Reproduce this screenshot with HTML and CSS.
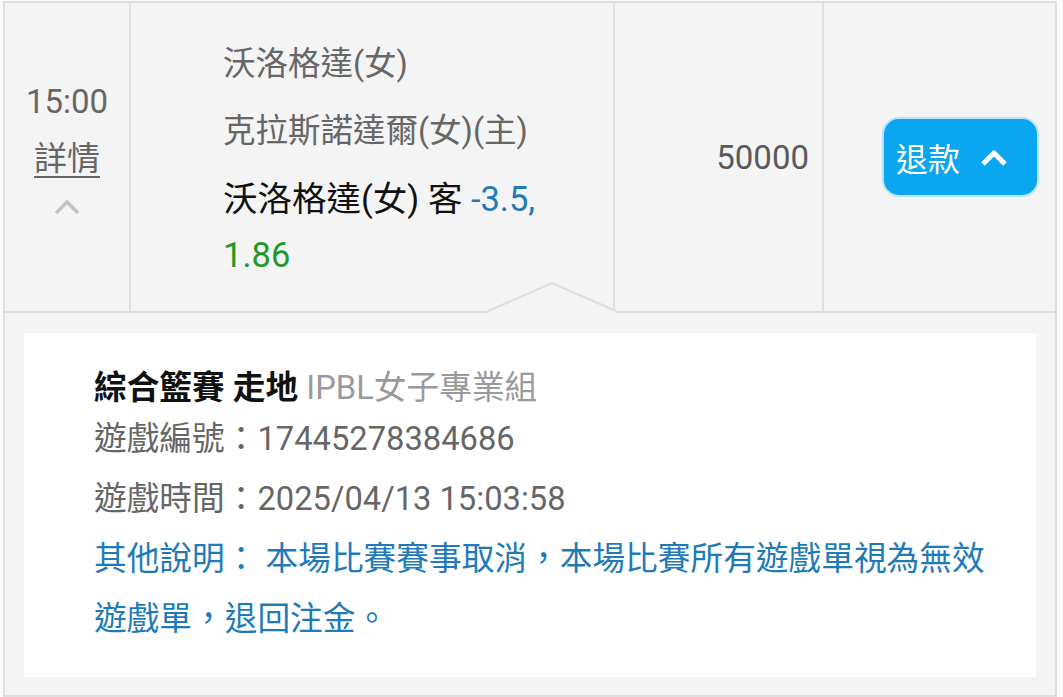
FILE: index.html
```html
<!DOCTYPE html>
<html lang="zh-Hant">
<head>
    <meta charset="UTF-8" />
    <title>注單明細</title>
    <link rel="stylesheet" href="styles.css">
</head>
<body>

    <div class="bet">
        <div class="bet-row">
            <div class="cell cell-time">
                <div class="time">15:00</div>
                <a class="detail-link" href="#">詳情</a>
                <svg class="chevron-gray" width="28" height="18" viewBox="0 0 28 18">
                    <polyline points="3,15 14,4 25,15" fill="none" stroke="#c2c2c2" stroke-width="3.5" />
                </svg>
            </div>

            <div class="cell cell-match">
                <div class="team">沃洛格達(女)</div>
                <div class="team">克拉斯諾達爾(女)(主)</div>
                <div class="pick">沃洛格達(女) 客 <span class="handicap">-3.5,</span> <span class="odds">1.86</span></div>

                <!-- arrow pointing down to the detail panel -->
                <svg class="notch" width="130" height="32" viewBox="0 0 130 32">
                    <polygon points="0,30 64,2 128,30 128,32 0,32" fill="#f4f4f4" />
                    <polyline points="0,30 64,2 128,30" fill="none" stroke="#dedede" stroke-width="2" />
                </svg>
            </div>

            <div class="cell cell-amount">50000</div>

            <div class="cell cell-action">
                <button class="btn-refund">
                    退款
                    <svg width="28" height="16" viewBox="0 0 28 16">
                        <polyline points="3,14 14,3 25,14" fill="none" stroke="#fff" stroke-width="5" stroke-linejoin="round" />
                    </svg>
                </button>
            </div>
        </div>

        <div class="bet-detail">
            <div class="detail-card">
                <div class="detail-title"><b>綜合籃賽 走地</b> <span class="league">IPBL女子專業組</span></div>
                <div class="detail-line">遊戲編號：17445278384686</div>
                <div class="detail-line">遊戲時間：2025/04/13 15:03:58</div>
                <div class="detail-note">其他說明： 本場比賽賽事取消，本場比賽所有遊戲單視為無效遊戲單，退回注金。</div>
            </div>
        </div>
    </div>

</body>
</html>
```

FILE: styles.css
```css
body {
    margin: 0;
    background-color: #fbfbfb;
    font-family: Roboto, "Noto Sans CJK TC", sans-serif;
    color: #666;
}

.bet {
    margin: 1px 6px 0 3px;
    border: 2px solid #dedede;
    background-color: #f4f4f4;
}

.bet-row {
    display: grid;
    grid-template-columns: 126px 484px 209px 1fr;
}

.cell {
    border-right: 2px solid #e0e0e0;
    border-bottom: 2px solid #dedede;
}

.cell:last-child {
    border-right: none;
}

.cell-time {
    display: flex;
    flex-direction: column;
    align-items: center;
    padding-top: 70px;
    font-size: 33px;
}

.time,
.detail-link {
    line-height: 57px;
}

.detail-link {
    color: #666;
    text-decoration: underline;
    text-decoration-thickness: 2px;
    text-underline-offset: 6px;
}

.chevron-gray {
    margin-top: 11px;
}

.cell-match {
    position: relative;
    padding: 28px 48px 28px 92px;
}

.team {
    font-size: 32.5px;
    line-height: 67px;
    white-space: nowrap;
}

.pick {
    margin-top: 6px;
    font-size: 34.5px;
    line-height: 56px;
    color: #111;
}

.handicap { color: #1f7bb8; }
.odds { color: #1f9a2a; }

.notch {
    position: absolute;
    right: -5px;
    bottom: -2px;
}

.cell-amount {
    display: flex;
    align-items: center;
    justify-content: flex-end;
    padding-right: 13px;
    font-size: 33px;
    color: #5a5a5a;
}

.cell-action {
    display: flex;
    align-items: center;
    justify-content: flex-end;
    padding-right: 15px;
}

.btn-refund {
    display: flex;
    align-items: center;
    gap: 20px;
    height: 80px;
    width: 157px;
    padding: 0 0 0 12px;
    margin-right: 1px;
    border: 2px solid #b9e3f8;
    border-radius: 17px;
    background-color: #0aa6f0;
    color: #fff;
    font-family: Roboto, "Noto Sans CJK TC", sans-serif;
    font-size: 32px;
    cursor: pointer;
}

.btn-refund svg {
    margin-top: 2px;
}

.bet-detail {
    padding: 20px 19px 18px 19px;
}

.detail-card {
    background-color: #fff;
    padding: 34px 40px 28px 70px;
    font-size: 32.7px;
}

.detail-title {
    line-height: 42px;
    color: #111;
}

.detail-title .league {
    color: #9a9a9a;
}

.detail-line {
    line-height: 60px;
    color: #666;
}

.detail-note {
    line-height: 60px;
    color: #1f7bb8;
}
```
